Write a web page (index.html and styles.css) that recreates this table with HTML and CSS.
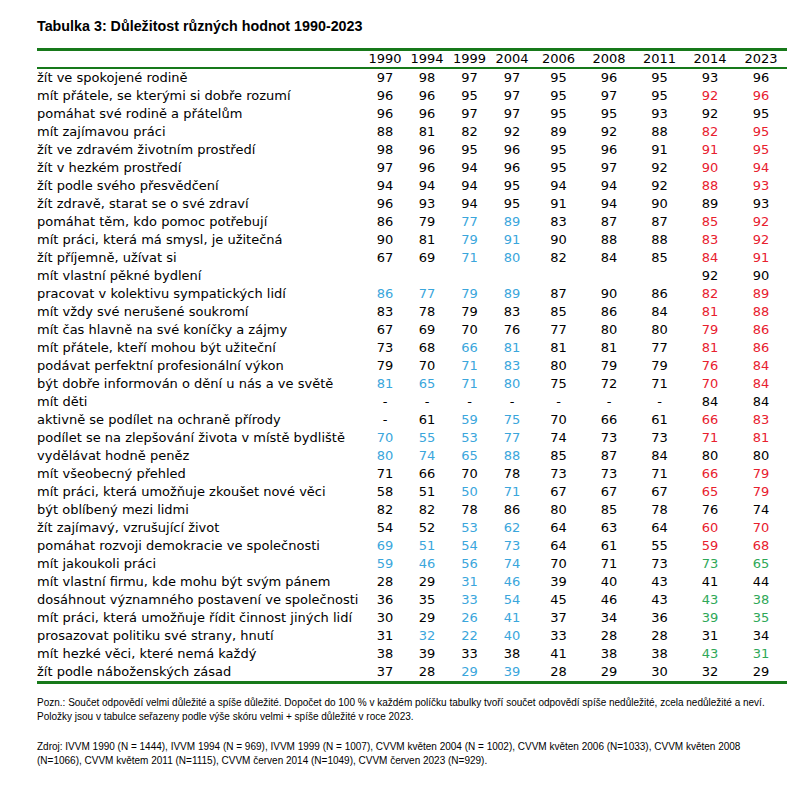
FILE: index.html
```html
<!DOCTYPE html>
<html lang="cs">
<head>
<meta charset="utf-8">
<title>Tabulka 3</title>
<link rel="stylesheet" href="styles.css">
</head>
<body>
<div class="page">
  <h1 class="title">Tabulka 3: Důležitost různých hodnot 1990-2023</h1>
  <table class="data">
    <colgroup>
      <col class="c-label">
      <col class="c-a"><col class="c-a"><col class="c-b"><col class="c-a">
      <col class="c-c"><col class="c-d"><col class="c-c"><col class="c-d"><col class="c-e">
    </colgroup>
    <thead>
      <tr><th></th><th>1990</th><th>1994</th><th>1999</th><th>2004</th><th>2006</th><th>2008</th><th>2011</th><th>2014</th><th>2023</th></tr>
    </thead>
    <tbody>
      <tr><td>žít ve spokojené rodině</td><td>97</td><td>98</td><td>97</td><td>97</td><td>95</td><td>96</td><td>95</td><td>93</td><td>96</td></tr>
      <tr><td>mít přátele, se kterými si dobře rozumí</td><td>96</td><td>96</td><td>95</td><td>97</td><td>95</td><td>97</td><td>95</td><td class="r">92</td><td class="r">96</td></tr>
      <tr><td>pomáhat své rodině a přátelům</td><td>96</td><td>96</td><td>97</td><td>97</td><td>95</td><td>95</td><td>93</td><td>92</td><td>95</td></tr>
      <tr><td>mít zajímavou práci</td><td>88</td><td>81</td><td>82</td><td>92</td><td>89</td><td>92</td><td>88</td><td class="r">82</td><td class="r">95</td></tr>
      <tr><td>žít ve zdravém životním prostředí</td><td>98</td><td>96</td><td>95</td><td>96</td><td>95</td><td>96</td><td>91</td><td class="r">91</td><td class="r">95</td></tr>
      <tr><td>žít v hezkém prostředí</td><td>97</td><td>96</td><td>94</td><td>96</td><td>95</td><td>97</td><td>92</td><td class="r">90</td><td class="r">94</td></tr>
      <tr><td>žít podle svého přesvědčení</td><td>94</td><td>94</td><td>94</td><td>95</td><td>94</td><td>94</td><td>92</td><td class="r">88</td><td class="r">93</td></tr>
      <tr><td>žít zdravě, starat se o své zdraví</td><td>96</td><td>93</td><td>94</td><td>95</td><td>91</td><td>94</td><td>90</td><td>89</td><td>93</td></tr>
      <tr><td>pomáhat těm, kdo pomoc potřebují</td><td>86</td><td>79</td><td class="b">77</td><td class="b">89</td><td>83</td><td>87</td><td>87</td><td class="r">85</td><td class="r">92</td></tr>
      <tr><td>mít práci, která má smysl, je užitečná</td><td>90</td><td>81</td><td class="b">79</td><td class="b">91</td><td>90</td><td>88</td><td>88</td><td class="r">83</td><td class="r">92</td></tr>
      <tr><td>žít příjemně, užívat si</td><td>67</td><td>69</td><td class="b">71</td><td class="b">80</td><td>82</td><td>84</td><td>85</td><td class="r">84</td><td class="r">91</td></tr>
      <tr><td>mít vlastní pěkné bydlení</td><td></td><td></td><td></td><td></td><td></td><td></td><td></td><td>92</td><td>90</td></tr>
      <tr><td>pracovat v kolektivu sympatických lidí</td><td class="b">86</td><td class="b">77</td><td class="b">79</td><td class="b">89</td><td>87</td><td>90</td><td>86</td><td class="r">82</td><td class="r">89</td></tr>
      <tr><td>mít vždy své nerušené soukromí</td><td>83</td><td>78</td><td>79</td><td>83</td><td>85</td><td>86</td><td>84</td><td class="r">81</td><td class="r">88</td></tr>
      <tr><td>mít čas hlavně na své koníčky a zájmy</td><td>67</td><td>69</td><td>70</td><td>76</td><td>77</td><td>80</td><td>80</td><td class="r">79</td><td class="r">86</td></tr>
      <tr><td>mít přátele, kteří mohou být užiteční</td><td>73</td><td>68</td><td class="b">66</td><td class="b">81</td><td>81</td><td>81</td><td>77</td><td class="r">81</td><td class="r">86</td></tr>
      <tr><td>podávat perfektní profesionální výkon</td><td>79</td><td>70</td><td class="b">71</td><td class="b">83</td><td>80</td><td>79</td><td>79</td><td class="r">76</td><td class="r">84</td></tr>
      <tr><td>být dobře informován o dění u nás a ve světě</td><td class="b">81</td><td class="b">65</td><td class="b">71</td><td class="b">80</td><td>75</td><td>72</td><td>71</td><td class="r">70</td><td class="r">84</td></tr>
      <tr><td>mít děti</td><td>-</td><td>-</td><td>-</td><td>-</td><td>-</td><td>-</td><td>-</td><td>84</td><td>84</td></tr>
      <tr><td>aktivně se podílet na ochraně přírody</td><td>-</td><td>61</td><td class="b">59</td><td class="b">75</td><td>70</td><td>66</td><td>61</td><td class="r">66</td><td class="r">83</td></tr>
      <tr><td>podílet se na zlepšování života v místě bydliště</td><td class="b">70</td><td class="b">55</td><td class="b">53</td><td class="b">77</td><td>74</td><td>73</td><td>73</td><td class="r">71</td><td class="r">81</td></tr>
      <tr><td>vydělávat hodně peněz</td><td class="b">80</td><td class="b">74</td><td class="b">65</td><td class="b">88</td><td>85</td><td>87</td><td>84</td><td>80</td><td>80</td></tr>
      <tr><td>mít všeobecný přehled</td><td>71</td><td>66</td><td>70</td><td>78</td><td>73</td><td>73</td><td>71</td><td class="r">66</td><td class="r">79</td></tr>
      <tr><td>mít práci, která umožňuje zkoušet nové věci</td><td>58</td><td>51</td><td class="b">50</td><td class="b">71</td><td>67</td><td>67</td><td>67</td><td class="r">65</td><td class="r">79</td></tr>
      <tr><td>být oblíbený mezi lidmi</td><td>82</td><td>82</td><td>78</td><td>86</td><td>80</td><td>85</td><td>78</td><td>76</td><td>74</td></tr>
      <tr><td>žít zajímavý, vzrušující život</td><td>54</td><td>52</td><td class="b">53</td><td class="b">62</td><td>64</td><td>63</td><td>64</td><td class="r">60</td><td class="r">70</td></tr>
      <tr><td>pomáhat rozvoji demokracie ve společnosti</td><td class="b">69</td><td class="b">51</td><td class="b">54</td><td class="b">73</td><td>64</td><td>61</td><td>55</td><td class="r">59</td><td class="r">68</td></tr>
      <tr><td>mít jakoukoli práci</td><td class="b">59</td><td class="b">46</td><td class="b">56</td><td class="b">74</td><td>70</td><td>71</td><td>73</td><td class="g">73</td><td class="g">65</td></tr>
      <tr><td>mít vlastní firmu, kde mohu být svým pánem</td><td>28</td><td>29</td><td class="b">31</td><td class="b">46</td><td>39</td><td>40</td><td>43</td><td>41</td><td>44</td></tr>
      <tr><td>dosáhnout významného postavení ve společnosti</td><td>36</td><td>35</td><td class="b">33</td><td class="b">54</td><td>45</td><td>46</td><td>43</td><td class="g">43</td><td class="g">38</td></tr>
      <tr><td>mít práci, která umožňuje řídit činnost jiných lidí</td><td>30</td><td>29</td><td class="b">26</td><td class="b">41</td><td>37</td><td>34</td><td>36</td><td class="g">39</td><td class="g">35</td></tr>
      <tr><td>prosazovat politiku své strany, hnutí</td><td>31</td><td class="b">32</td><td class="b">22</td><td class="b">40</td><td>33</td><td>28</td><td>28</td><td>31</td><td>34</td></tr>
      <tr><td>mít hezké věci, které nemá každý</td><td>38</td><td>39</td><td>33</td><td>38</td><td>41</td><td>38</td><td>38</td><td class="g">43</td><td class="g">31</td></tr>
      <tr><td>žít podle náboženských zásad</td><td>37</td><td>28</td><td class="b">29</td><td class="b">39</td><td>28</td><td>29</td><td>30</td><td>32</td><td>29</td></tr>
    </tbody>
  </table>
  <p class="note">Pozn.: Součet odpovědí velmi důležité a spíše důležité. Dopočet do 100 % v každém políčku tabulky tvoří součet odpovědí spíše nedůležité, zcela nedůležité a neví. Položky jsou v tabulce seřazeny podle výše skóru velmi + spíše důležité v roce 2023.</p>
  <p class="note source">Zdroj: IVVM 1990 (N = 1444), IVVM 1994 (N = 969), IVVM 1999 (N = 1007), CVVM květen 2004 (N = 1002), CVVM květen 2006 (N=1033), CVVM květen 2008 (N=1066), CVVM květem 2011 (N=1115), CVVM červen 2014 (N=1049), CVVM červen 2023 (N=929).</p>
</div>
</body>
</html>
```

FILE: styles.css
```css
html, body {
  margin: 0;
  padding: 0;
  background: #ffffff;
}

.page {
  padding: 18px 0 0 37px;
  width: 750px;
  color: #000000;
}

.title {
  margin: 0 0 14px 0;
  font-family: "Liberation Sans", Arial, sans-serif;
  font-size: 14.3px;
  line-height: 16px;
  font-weight: bold;
}

.data {
  width: 750px;
  border-collapse: collapse;
  table-layout: fixed;
  font-family: "DejaVu Sans", Verdana, sans-serif;
  font-size: 13px;
  border-bottom: 3px solid #17791a;
}

.c-label { width: 327px; }
.c-a { width: 42px; }
.c-b { width: 43px; }
.c-c { width: 51px; }
.c-d { width: 50px; }
.c-e { width: 52px; }

.data thead tr {
  border-top: 3px solid #17791a;
  border-bottom: 2px solid #17791a;
}

.data th {
  height: 16px;
  padding: 0;
  font-weight: normal;
  text-align: center;
  line-height: 16px;
}

.data td {
  height: 18px;
  padding: 0;
  line-height: 18px;
  text-align: center;
  white-space: nowrap;
}

.data td:first-child {
  text-align: left;
}

.data .r { color: #e8202e; }
.data .b { color: #3aa6dc; }
.data .g { color: #2ea858; }

.note {
  margin: 12px 0 0 0;
  font-family: "Liberation Sans", Arial, sans-serif;
  font-size: 10px;
  line-height: 14px;
  width: 745px;
}

.note.source {
  margin-top: 16px;
}
```
